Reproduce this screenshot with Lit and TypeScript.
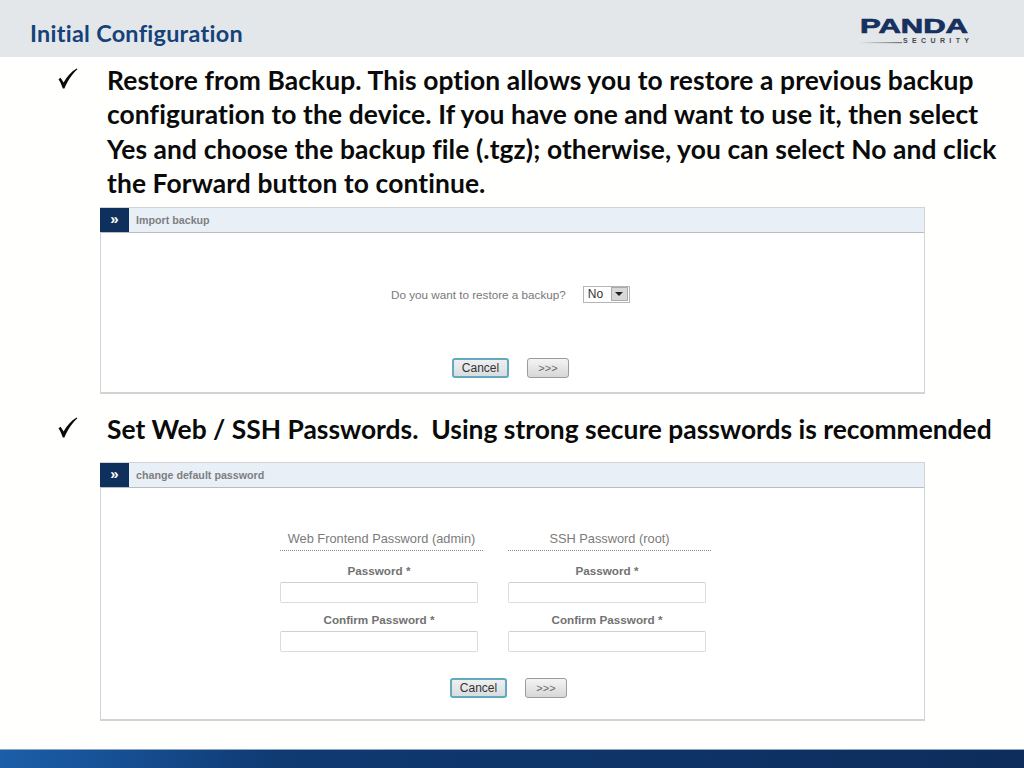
import { LitElement, html, css, svg } from "lit";
import { customElement } from "lit/decorators.js";

const check = svg`<svg class="check" width="20" height="21" viewBox="0 0 20 21"><path d="M0.5 11.2 L2.6 9.8 L5.6 14.6 C8.6 9 13 3.6 18.6 0.4 L19.4 1.2 C14.4 5.6 9.8 12.6 6.4 20.4 L4.8 20.4 C3.6 17 2.2 13.8 0.5 11.2 Z" fill="#0a0a0a"/></svg>`;

const logo = svg`<svg class="logo" width="112" height="30" viewBox="0 0 112 30">
  <defs><linearGradient id="lg" x1="0" x2="1"><stop offset="0" stop-color="#e2e4e6"/><stop offset="1" stop-color="#6f7174"/></linearGradient></defs>
  <text x="1" y="17" font-family="Liberation Sans" font-weight="700" font-size="20" fill="#16305f" stroke="#16305f" stroke-width=".7" textLength="108" lengthAdjust="spacingAndGlyphs">PANDA</text>
  <rect x="1" y="26" width="42" height="1.2" fill="url(#lg)"/>
  <text x="44" y="27" font-family="Liberation Sans" font-weight="700" font-size="7" fill="#44474b" textLength="66" lengthAdjust="spacing">SECURITY</text>
</svg>`;

@customElement("app-root")
export class AppRoot extends LitElement {
  static styles = css`
    :host { display: flex; flex-direction: column; width: 1024px; height: 768px; background: #fffffd; overflow: hidden; font-family: "Liberation Sans", Arial, sans-serif; }
    .top { height: 57px; flex: none; background: #e4e7e9; display: flex; align-items: flex-start; justify-content: space-between; padding: 0 53px 0 30px; box-sizing: border-box; }
    .top h1 { margin: 19px 0 0; font: 700 23.4px/28px Lato, "Open Sans", sans-serif; font-variant-ligatures: none; letter-spacing: .28px; color: #14427a; white-space: nowrap; }
    .logo { margin-top: 16px; display: block; }
    main { flex: 1; display: flex; flex-direction: column; }
    .item { display: flex; padding-left: 58px; }
    .item.one { margin-top: 6px; }
    .item.two { margin-top: 18px; }
    .check { flex: none; margin: 5px 29px 0 0; display: block; }
    .lines { font: 700 26.4px/34.4px Lato, "Open Sans", sans-serif; font-variant-ligatures: none; color: #0a0a0a; white-space: nowrap; }
    .one .lines { letter-spacing: .1px; }
    .lines span { display: block; }
    .panel { margin-left: 100px; width: 825px; box-sizing: border-box; border: 1px solid #d2d3d4; border-bottom: 2px solid #d2d3d4; background: #fff; font-family: "Liberation Sans", Arial, sans-serif; color: #6f6f6f; }
    .p1 { margin-top: 6px; height: 187px; }
    .p2 { margin-top: 16px; height: 259px; }
    .bar { height: 24px; display: flex; align-items: center; background: #e9eff6; border-bottom: 1px solid #b9bdc1; font-size: 10.7px; font-weight: 700; color: #7d8083; }
    .mark { width: 29px; margin-left: -1px; margin-right: 7px; align-self: stretch; background: #0f2f5c; color: #fff; display: flex; align-items: center; justify-content: center; font-size: 15px; font-weight: 700; padding-bottom: 3px; box-sizing: border-box; }
    .q { display: flex; align-items: center; margin: 53px 0 0 290px; font-size: 11.7px; color: #77797b; }
    .select { margin-left: 17px; width: 47px; height: 17px; box-sizing: border-box; border: 1px solid #b5b5b5; display: flex; align-items: center; justify-content: space-between; padding: 0 1px 0 4px; background: #fff; color: #333; font-size: 12px; }
    .arrow { width: 17px; height: 14px; background: #d8d8d8; border: 1px solid #aaa; box-sizing: border-box; display: flex; align-items: center; justify-content: center; }
    .arrow i { width: 0; height: 0; border: 4px solid transparent; border-top: 4px solid #222; border-bottom: 0; }
    .btns { display: flex; gap: 18px; }
    .p1 .btns { margin: 55px 0 0 351px; }
    .p2 .btns { margin: 26px 0 0 349px; }
    .btn { height: 20px; width: 42px; box-sizing: border-box; display: flex; align-items: center; justify-content: center; border: 1px solid #9c9c9c; border-radius: 3px; background: linear-gradient(#f4f4f4, #d7d7d7); font-size: 11px; color: #666; }
    .btn.c { width: 57px; border: 2px solid #63a9bf; color: #333; font-size: 12px; background: linear-gradient(#efefef, #d9dde0); }
    .cols { display: flex; gap: 25px; margin: 40px 0 0 179px; }
    .col { width: 203px; }
    .col h3 { margin: 0; padding: 3px 0; height: 16px; box-sizing: content-box; line-height: 16px; font-size: 12.8px; font-weight: 400; text-align: center; color: #7b7b7b; border-bottom: 1px dotted #8d8d8d; white-space: nowrap; }
    .col label { display: block; width: 198px; text-align: center; font-size: 11.7px; font-weight: 700; color: #727272; line-height: 13px; }
    .col label.a { margin-top: 13px; }
    .col label.b { margin-top: 10px; }
    .input { width: 198px; height: 21px; margin-top: 5px; box-sizing: border-box; border: 1px solid #dcdcdc; border-top-color: #cfcfcf; border-radius: 2px; background: #fff; }
    .foot { height: 19px; flex: none; border-top: 1px solid #8ea7c5; box-sizing: border-box; background: linear-gradient(90deg, #1b5ea9 0%, #164f93 12%, #0f3a72 27%, #0e3468 60%, #0e2d5c 100%); }
  `;

  private column(title: string) {
    return html`<div class="col">
      <h3>${title}</h3>
      <label class="a">Password *</label>
      <div class="input"></div>
      <label class="b">Confirm Password *</label>
      <div class="input"></div>
    </div>`;
  }

  private bar(title: string) {
    return html`<div class="bar"><div class="mark">»</div>${title}</div>`;
  }

  private buttons() {
    return html`<div class="btns"><div class="btn c">Cancel</div><div class="btn">&gt;&gt;&gt;</div></div>`;
  }

  render() {
    return html`
      <header class="top"><h1>Initial Configuration</h1>${logo}</header>
      <main>
        <div class="item one">${check}<div class="lines">
          <span>Restore from Backup. This option allows you to restore a previous backup</span>
          <span>configuration to the device. If you have one and want to use it, then select</span>
          <span>Yes and choose the backup file (.tgz); otherwise, you can select No and click</span>
          <span>the Forward button to continue.</span>
        </div></div>
        <section class="panel p1">
          ${this.bar("Import backup")}
          <div class="q">Do you want to restore a backup?<div class="select">No<div class="arrow"><i></i></div></div></div>
          ${this.buttons()}
        </section>
        <div class="item two">${check}<div class="lines"><span>Set Web / SSH Passwords.&nbsp; Using strong secure passwords is recommended</span></div></div>
        <section class="panel p2">
          ${this.bar("change default password")}
          <div class="cols">${this.column("Web Frontend Password (admin)")}${this.column("SSH Password (root)")}</div>
          ${this.buttons()}
        </section>
      </main>
      <footer class="foot"></footer>
    `;
  }
}
